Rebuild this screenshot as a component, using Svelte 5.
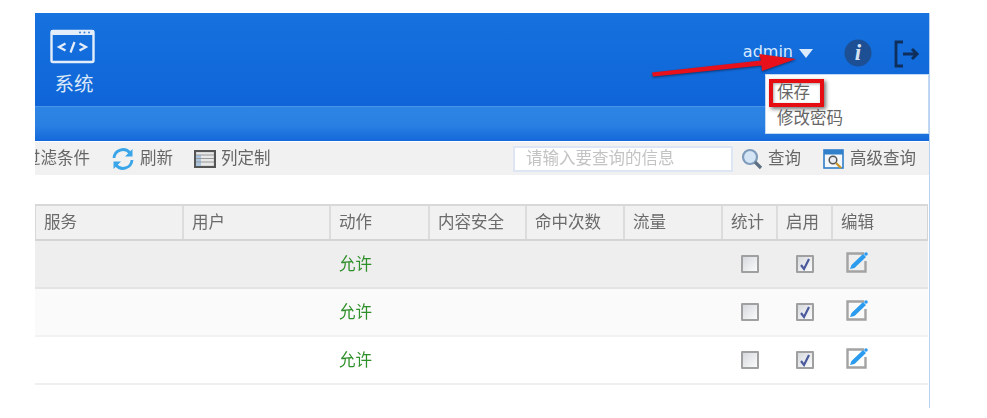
<script>
  const columns = [
    { label: '服务', width: 148 },
    { label: '用户', width: 147 },
    { label: '动作', width: 99 },
    { label: '内容安全', width: 97 },
    { label: '命中次数', width: 98 },
    { label: '流量', width: 98 },
    { label: '统计', width: 55 },
    { label: '启用', width: 55 },
    { label: '编辑', width: 96 }
  ];
  const template = columns.map((c) => c.width + 'px').join(' ');
  const rows = [{ tone: 'hover' }, { tone: 'alt' }, { tone: 'plain' }];
</script>

<div class="page">
  <div class="frame" style="--cols: {template}">
    <header class="banner">
      <div class="module">
        <svg class="module-icon" width="46" height="36" viewBox="0 0 46 36">
          <rect x="1.500" y="2" width="42" height="31" rx="1.500" fill="none" stroke="#e4eefa" stroke-width="2.400" />
          <rect x="1" y="1" width="43" height="5" fill="#e4eefa" />
          <circle cx="30" cy="3.500" r="1" fill="#3a80d8" />
          <circle cx="34.500" cy="3.500" r="1" fill="#3a80d8" />
          <circle cx="39" cy="3.500" r="1" fill="#3a80d8" />
          <path d="M15.500 14.500l-6.500 3.500 6.500 3.500M29.500 14.500l6.500 3.500-6.500 3.500M24.500 13l-4 10.500" fill="none" stroke="#e4eefa" stroke-width="2.200" />
        </svg>
        <span class="module-label">系统</span>
      </div>
      <div class="user">
        <span class="user-name">admin</span>
        <span class="caret"></span>
        <svg class="info" width="28" height="28" viewBox="0 0 28 28">
          <circle cx="14" cy="14" r="13.500" fill="#1c4f94" />
          <text x="14" y="21" text-anchor="middle" class="info-i">i</text>
        </svg>
        <svg class="logout" width="26" height="28" viewBox="0 0 26 28">
          <path d="M9 2H2v24h7" fill="none" stroke="#0e2f5c" stroke-width="2.800" />
          <path d="M9 14h14M18 9l5 5-5 5" fill="none" stroke="#0e2f5c" stroke-width="3" />
        </svg>
      </div>
    </header>
    <div class="subbar"></div>

    <div class="toolbar">
      <div class="tools">
        <span class="tool filter">过滤条件</span>
        <span class="tool">
          <svg width="24" height="24" viewBox="0 0 24 24">
            <path d="M3 11a9 9 0 0 1 16-5M21 13a9 9 0 0 1-16 5" fill="none" stroke="#3aa5e8" stroke-width="2.800" />
            <path d="M21.500 2v7.500H14zM2.500 22v-7.500H10z" fill="#3aa5e8" />
          </svg>
          刷新
        </span>
        <span class="tool">
          <svg width="22" height="18" viewBox="0 0 22 18">
            <rect x="1" y="1" width="20" height="16" fill="#e8e8e8" stroke="#555" stroke-width="2.200" />
            <rect x="2" y="5" width="5" height="11" fill="#a9c4de" />
            <path d="M2 5h18M2 8.500h18M2 12h18" stroke="#999" />
          </svg>
          列定制
        </span>
      </div>
      <div class="search">
        <input class="search-box" placeholder="请输入要查询的信息" />
        <span class="tool">
          <svg width="22" height="22" viewBox="0 0 22 22">
            <circle cx="9" cy="9" r="7" fill="#d4e6f6" stroke="#7f9cbc" stroke-width="2.200" />
            <path d="M14 14l6 6" stroke="#5d6f82" stroke-width="3.200" />
          </svg>
          查询
        </span>
        <span class="tool">
          <svg width="22" height="20" viewBox="0 0 22 20">
            <rect x="1" y="1" width="19" height="18" fill="#f5f8fb" stroke="#2f7fca" stroke-width="1.600" />
            <rect x="1" y="1" width="19" height="4.500" fill="#2f7fca" />
            <circle cx="10" cy="11" r="3.800" fill="#e8eef4" stroke="#555" stroke-width="1.500" />
            <path d="M13 14l5 5" stroke="#c9962b" stroke-width="2.400" />
          </svg>
          高级查询
        </span>
      </div>
    </div>

    <div class="grid head">
      {#each columns as col}
        <div class="th">{col.label}</div>
      {/each}
    </div>
    {#each rows as row}
      <div class="grid row {row.tone}">
        <div></div>
        <div></div>
        <div class="allow">允许</div>
        <div></div>
        <div></div>
        <div></div>
        <div class="center"><span class="check"></span></div>
        <div class="center">
          <span class="check on">
            <svg width="12" height="13" viewBox="0 0 12 13"><path d="M2 7l3 4 5-10" fill="none" stroke="#4a5a9c" stroke-width="2.200" /></svg>
          </span>
        </div>
        <div class="edit">
          <svg width="23" height="21" viewBox="0 0 23 21">
            <path d="M18 1.500H1.500v18h18V9" fill="none" stroke="#a3a3a3" stroke-width="2.400" />
            <path d="M4 17l1.500-4L17 2l3 3L8.500 16z" fill="#2a9bee" />
            <circle cx="20" cy="2" r="1.800" fill="#2a9bee" />
          </svg>
        </div>
      </div>
    {/each}

    <div class="menu">
      <div class="menu-item">保存</div>
      <div class="menu-item">修改密码</div>
    </div>
    <div class="mark"></div>
    <svg class="arrow" width="170" height="40" viewBox="0 0 170 40">
      <path d="M2 23.500L111 11.500 109 5l37 5-34 12-.5-5.500L3 27.500z" fill="#e8101a" />
    </svg>
  </div>
</div>

<style>
  :global(body) {
    margin: 0;
    background: #fff;
  }

  .page {
    height: 418px;
    padding: 13px 0 0 35px;
    box-sizing: border-box;
    overflow: hidden;
    font-family: "Noto Sans CJK SC", "Liberation Sans", sans-serif;
    color: #666;
    filter: blur(0.5px);
  }

  .frame {
    position: relative;
    width: 895px;
    height: 395px;
    box-sizing: border-box;
    border-right: 1px solid #b9d2f2;
  }

  .banner {
    height: 93px;
    display: flex;
    justify-content: space-between;
    background: linear-gradient(#1672de, #0f65d8);
    box-sizing: border-box;
    padding: 16px 9px 0 14px;
  }

  .module {
    display: flex;
    flex-direction: column;
    align-items: center;
    width: 48px;
  }

  .module-label {
    margin-top: 6px;
    padding-left: 2px;
    font-size: 19.500px;
    line-height: 24px;
    color: #dbe8f8;
    white-space: nowrap;
  }

  .user {
    display: flex;
    align-items: flex-start;
    height: 32px;
    margin-top: 8px;
  }

  .user-name {
    font-family: "DejaVu Sans", sans-serif;
    font-size: 16px;
    line-height: 30px;
    color: #d8eaff;
  }

  .caret {
    width: 0;
    height: 0;
    margin: 12px 0 0 6px;
    border-left: 7px solid transparent;
    border-right: 7px solid transparent;
    border-top: 9px solid #dcebfb;
  }

  .info {
    margin: 2px 0 0 31px;
  }

  .info-i {
    font-family: "Liberation Serif", serif;
    font-style: italic;
    font-weight: 700;
    font-size: 23px;
    fill: #d5e2f3;
  }

  .logout {
    margin: 3px 0 0 22px;
  }

  .subbar {
    height: 35px;
    background: linear-gradient(#2f85e4, #2a80e2 55%, #1468da);
    box-shadow: inset 0 1px 0 #4a94e8;
  }

  .toolbar {
    height: 33px;
    margin-top: 1px;
    display: flex;
    justify-content: space-between;
    align-items: center;
    background: #f1f1f1;
    font-size: 16.500px;
    padding-right: 13px;
  }

  .tools,
  .search {
    display: flex;
    align-items: center;
  }

  .tools {
    gap: 21px;
  }

  .tool {
    display: flex;
    align-items: center;
    gap: 5px;
    line-height: 28px;
    padding-bottom: 3px;
    white-space: nowrap;
    color: #666;
  }

  .tool svg {
    margin-top: 3px;
  }

  .filter {
    width: 55px;
    justify-content: flex-end;
    overflow: hidden;
  }

  .search-box {
    width: 220px;
    height: 26px;
    padding: 0 11px 3px;
    margin-right: 8px;
    box-sizing: border-box;
    border: 2px solid #dde6f2;
    background: #fff;
    font: 16.500px "Noto Sans CJK SC", sans-serif;
    outline: none;
  }

  .search-box::placeholder {
    color: #c3c3c3;
  }

  .search .tool + .tool {
    margin-left: 22px;
  }

  .grid {
    display: grid;
    grid-template-columns: var(--cols);
    width: 893px;
  }

  .head {
    height: 37px;
    margin-top: 29px;
    box-sizing: border-box;
    background: #f1f1f1;
    border-top: 2px solid #d8d8d8;
    border-bottom: 2px solid #d4d4d4;
    border-left: 1px solid #d8d8d8;
    border-right: 1px solid #d4d4d4;
    font-size: 16.500px;
    line-height: 30px;
  }

  .th {
    padding-left: 8px;
    border-right: 2px solid #dcdcdc;
    color: #6b6b6b;
  }

  .th:last-child {
    border-right: 0;
  }

  .row {
    height: 48px;
    box-sizing: border-box;
    border-bottom: 2px solid #efefef;
    font-size: 16.500px;
    line-height: 44px;
  }

  .hover {
    background: #eeeeee;
    border-bottom-color: #e4e4e4;
  }

  .alt {
    background: #fafafa;
    border-bottom-color: #f2f2f2;
  }

  .plain {
    background: #fff;
  }

  .allow {
    padding-left: 9px;
    color: #2f8f2a;
  }

  .center {
    display: flex;
    align-items: center;
    justify-content: center;
  }

  .check {
    width: 18px;
    height: 18px;
    box-sizing: border-box;
    display: flex;
    align-items: center;
    justify-content: center;
    border: 2px solid #a0a0a0;
    border-radius: 1px;
    background: linear-gradient(135deg, #d6d9de, #fbfbfb);
  }

  .edit {
    display: flex;
    align-items: center;
    padding: 0 0 3px 14px;
  }

  .menu {
    position: absolute;
    left: 730px;
    top: 61px;
    width: 164px;
    height: 60px;
    box-sizing: border-box;
    padding: 3px 0 0 11px;
    background: #fff;
    border: 1px solid #c3d8f3;
    font-size: 16.500px;
    line-height: 26px;
    color: #666;
  }

  .mark {
    position: absolute;
    left: 734px;
    top: 66px;
    width: 55px;
    height: 28px;
    box-sizing: border-box;
    border: 4px solid #e60d12;
    box-shadow: 2px 2px 4px rgba(0, 0, 0, 0.55), inset 1px 1px 3px rgba(0, 0, 0, 0.35);
  }

  .arrow {
    position: absolute;
    left: 615px;
    top: 36px;
    filter: drop-shadow(0 1px 1px rgba(0, 0, 0, 0.5));
  }
</style>
